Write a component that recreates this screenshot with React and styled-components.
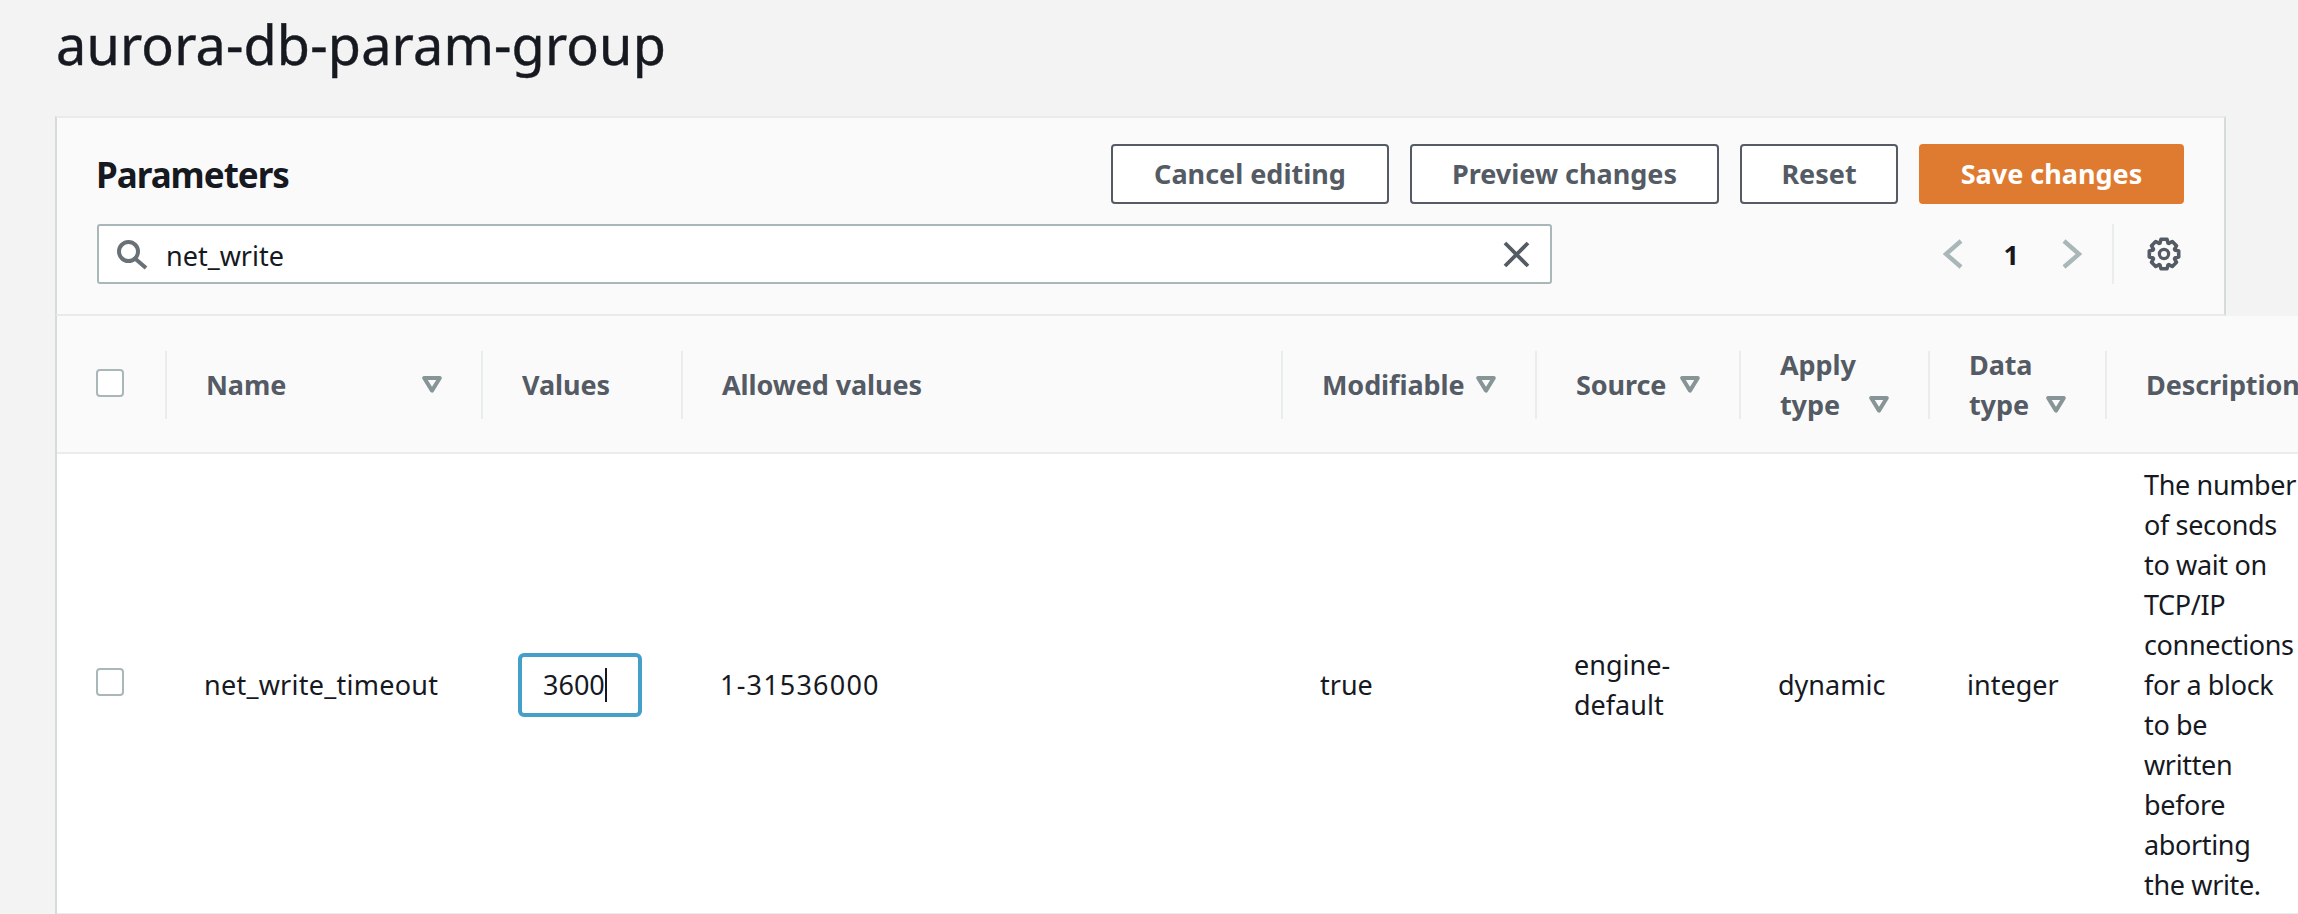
import React from "react";
import styled, { createGlobalStyle } from "styled-components";

const GlobalStyle = createGlobalStyle`
  html, body {
    margin: 0;
    padding: 0;
    background: #f3f3f3;
  }
  body {
    font-family: "Noto Sans", "Open Sans", sans-serif;
    color: #16191f;
  }
`;

const Page = styled.div`
  width: 2298px;
  height: 914px;
  overflow: hidden;
  box-sizing: border-box;
  padding-left: 55px;
  background: #f3f3f3;
`;

const Title = styled.h1`
  margin: 0;
  height: 116px;
  padding: 9px 0 0 1px;
  box-sizing: border-box;
  font-size: 54px;
  line-height: 70px;
  font-weight: 400;
  letter-spacing: 0.15px;
  white-space: nowrap;
  -webkit-text-stroke: 0.4px #16191f;
`;

const PanelHeader = styled.section`
  width: 2171px;
  height: 200px;
  box-sizing: border-box;
  padding: 26px 40px 0 40px;
  background: #fafafa;
  border: 2px solid #e8ebeb;
  border-left-color: #d5dbdb;
  border-right-color: #d5dbdb;
  display: flex;
  flex-direction: column;
  gap: 20px;
`;

const TopRow = styled.div`
  display: flex;
  align-items: center;
  justify-content: space-between;
  height: 60px;
`;

const Heading = styled.h2`
  margin: 2px 0 0 -1px;
  font-size: 35px;
  line-height: 44px;
  font-weight: 700;
  letter-spacing: -1px;
`;

const Actions = styled.div`
  display: flex;
  gap: 21px;
`;

const Button = styled.button`
  width: ${(p) => p.$width}px;
  height: 60px;
  box-sizing: border-box;
  border-radius: 4px;
  border: 2px solid ${(p) => (p.$primary ? "#df7b31" : "#545b64")};
  background: ${(p) => (p.$primary ? "#df7b31" : "#fff")};
  color: ${(p) => (p.$primary ? "#fff" : "#545b64")};
  font-family: inherit;
  font-size: 27px;
  line-height: 36px;
  font-weight: 700;
  padding: 0;
`;

const FilterRow = styled.div`
  display: flex;
  align-items: center;
`;

const SearchBox = styled.div`
  width: 1455px;
  height: 60px;
  box-sizing: border-box;
  display: flex;
  align-items: center;
  padding: 0 19px 0 18px;
  background: #fff;
  border: 2px solid #aab7b8;
  border-radius: 3px;
`;

const SearchText = styled.span`
  flex: 1;
  margin: 2px 0 0 18px;
  font-size: 27px;
  color: #16191f;
`;

const SearchIcon = styled.svg`
  flex: none;
  width: 31px;
  height: 30px;
  margin-top: 1px;
`;

const ClearIcon = styled.svg`
  flex: none;
  width: 29px;
  height: 29px;
`;

const Pager = styled.div`
  margin-left: auto;
  margin-right: 2px;
  height: 60px;
  display: flex;
  align-items: center;
`;

const PageNumber = styled.span`
  margin: 0 42px 0 40px;
  font-size: 27px;
  font-weight: 700;
`;

const PagerRule = styled.span`
  width: 2px;
  height: 60px;
  margin: 0 32px 0 30px;
  background: #eaeded;
`;

const GearIcon = styled.svg`
  flex: none;
  width: 36px;
  height: 36px;
`;

const Table = styled.div`
  width: 2243px;
  border-left: 2px solid #d5dbdb;
  display: grid;
  grid-template-columns: 108px 316px 200px 600px 254px 204px 189px 177px 193px;
`;

const HeadRow = styled.div`
  grid-column: 1 / -1;
  display: grid;
  grid-template-columns: subgrid;
  height: 136px;
  background: #fafafa;
  border-bottom: 2px solid #eaeded;
`;

const BodyRow = styled.div`
  grid-column: 1 / -1;
  display: grid;
  grid-template-columns: subgrid;
  height: 459px;
  background: #fff;
  border-bottom: 2px solid #eaeded;
`;

const CheckCell = styled.div`
  display: flex;
  align-items: center;
  padding-left: 39px;
  padding-bottom: ${(p) => p.$lift}px;
`;

const Check = styled.span`
  display: block;
  width: 28px;
  height: 28px;
  box-sizing: border-box;
  background: #fff;
  border: 2px solid #aab7b8;
  border-radius: 4px;
`;

const HeadCell = styled.div`
  position: relative;
  display: flex;
  align-items: center;
  justify-content: space-between;
  padding: 2px 39px 0 41px;
  font-size: 27px;
  line-height: 40px;
  font-weight: 700;
  letter-spacing: -0.1px;
  color: #545b64;
  white-space: nowrap;

  &::before {
    content: "";
    position: absolute;
    left: 0;
    top: 35px;
    height: 68px;
    width: 2px;
    background: #eaeded;
  }
`;

const SortLabel = styled.div`
  display: flex;
  flex: 1;
  align-items: flex-end;
  justify-content: space-between;
`;

const Wrapped = styled.span`
  display: block;
  width: min-content;
  white-space: normal;
`;

const Cell = styled.div`
  display: flex;
  align-items: center;
  padding: 2px 0 0 39px;
  font-size: 27px;
  line-height: 40px;
  letter-spacing: ${(p) => p.$spacing || 0}px;
`;

const ValueBox = styled.div`
  width: 124px;
  height: 64px;
  box-sizing: border-box;
  margin-left: -2px;
  padding-left: 21px;
  display: flex;
  align-items: center;
  background: #fff;
  border: 4px solid #44a0c8;
  border-radius: 6px;
`;

const Caret = styled.span`
  display: inline-block;
  width: 2px;
  height: 34px;
  background: #16191f;
`;

const Description = styled.div`
  white-space: nowrap;
  letter-spacing: -0.35px;
`;

const DescriptionLine = styled.div``;

const TriangleSvg = styled.svg`
  flex: none;
  width: 20px;
  height: 17px;
  margin-bottom: 12px;
`;

const Triangle = () => (
  <TriangleSvg viewBox="0 0 20 17">
    <path d="M2.2 2h15.6L10 14.6z" fill="none" stroke="#879596" strokeWidth="4" strokeLinejoin="round" />
  </TriangleSvg>
);

const ChevronSvg = styled.svg`
  flex: none;
  width: 21px;
  height: 30px;
`;

const Chevron = ({ flip }) => (
  <ChevronSvg viewBox="0 0 21 30">
    <path
      d={flip ? "M3 2l15 13L3 28" : "M18 2L3 15l15 13"}
      fill="none"
      stroke="#aab7b8"
      strokeWidth="4.4"
    />
  </ChevronSvg>
);

// 8 toothed gear outline, centred on 18,18
const gearPoints = Array.from({ length: 8 }, (_, i) => {
  const mid = (i * Math.PI) / 4;
  return [
    [mid - 0.36, 11.6],
    [mid - 0.2, 15],
    [mid + 0.2, 15],
    [mid + 0.36, 11.6],
  ];
})
  .flat()
  .map(([a, r]) => `${(18 + r * Math.sin(a)).toFixed(2)},${(18 - r * Math.cos(a)).toFixed(2)}`)
  .join(" ");

const columns = [
  { label: "Name", sort: true },
  { label: "Values" },
  { label: "Allowed values" },
  { label: "Modifiable", sort: true },
  { label: "Source", sort: true },
  { label: "Apply type", sort: true, wrap: true },
  { label: "Data type", sort: true, wrap: true },
  { label: "Description" },
];

const descriptionLines = [
  "The number",
  "of seconds",
  "to wait on",
  "TCP/IP",
  "connections",
  "for a block",
  "to be",
  "written",
  "before",
  "aborting",
  "the write.",
];

const App = () => (
  <Page>
    <GlobalStyle />
    <Title>aurora-db-param-group</Title>
    <PanelHeader>
      <TopRow>
        <Heading>Parameters</Heading>
        <Actions>
          <Button $width={278}>Cancel editing</Button>
          <Button $width={309}>Preview changes</Button>
          <Button $width={158}>Reset</Button>
          <Button $width={265} $primary>
            Save changes
          </Button>
        </Actions>
      </TopRow>
      <FilterRow>
        <SearchBox>
          <SearchIcon viewBox="0 0 31 30">
            <circle cx="11.5" cy="11.5" r="9.5" fill="none" stroke="#687078" strokeWidth="4" />
            <path d="M18 18.5l11 9.5" fill="none" stroke="#687078" strokeWidth="4" />
          </SearchIcon>
          <SearchText>net_write</SearchText>
          <ClearIcon viewBox="0 0 29 29">
            <path d="M3 3l23 23M26 3L3 26" fill="none" stroke="#545b64" strokeWidth="3.8" />
          </ClearIcon>
        </SearchBox>
        <Pager>
          <Chevron />
          <PageNumber>1</PageNumber>
          <Chevron flip />
          <PagerRule />
          <GearIcon viewBox="0 0 36 36">
            <polygon points={gearPoints} fill="none" stroke="#545b64" strokeWidth="3.6" strokeLinejoin="round" />
            <circle cx="18" cy="18" r="4.6" fill="none" stroke="#545b64" strokeWidth="3.2" />
          </GearIcon>
        </Pager>
      </FilterRow>
    </PanelHeader>
    <Table>
      <HeadRow>
        <CheckCell $lift={3}>
          <Check />
        </CheckCell>
        {columns.map((col) => (
          <HeadCell key={col.label}>
            {col.sort ? (
              <SortLabel>
                {col.wrap ? <Wrapped>{col.label}</Wrapped> : <span>{col.label}</span>}
                <Triangle />
              </SortLabel>
            ) : (
              col.label
            )}
          </HeadCell>
        ))}
      </HeadRow>
      <BodyRow>
        <CheckCell $lift={3}>
          <Check />
        </CheckCell>
        <Cell $spacing={0.25}>net_write_timeout</Cell>
        <Cell>
          <ValueBox>
            3600
            <Caret />
          </ValueBox>
        </Cell>
        <Cell $spacing={1.2}>1-31536000</Cell>
        <Cell>true</Cell>
        <Cell>
          <Wrapped>engine-default</Wrapped>
        </Cell>
        <Cell>dynamic</Cell>
        <Cell>integer</Cell>
        <Cell>
          <Description>
            {descriptionLines.map((line) => (
              <DescriptionLine key={line}>{line}</DescriptionLine>
            ))}
          </Description>
        </Cell>
      </BodyRow>
    </Table>
  </Page>
);

export default App;
